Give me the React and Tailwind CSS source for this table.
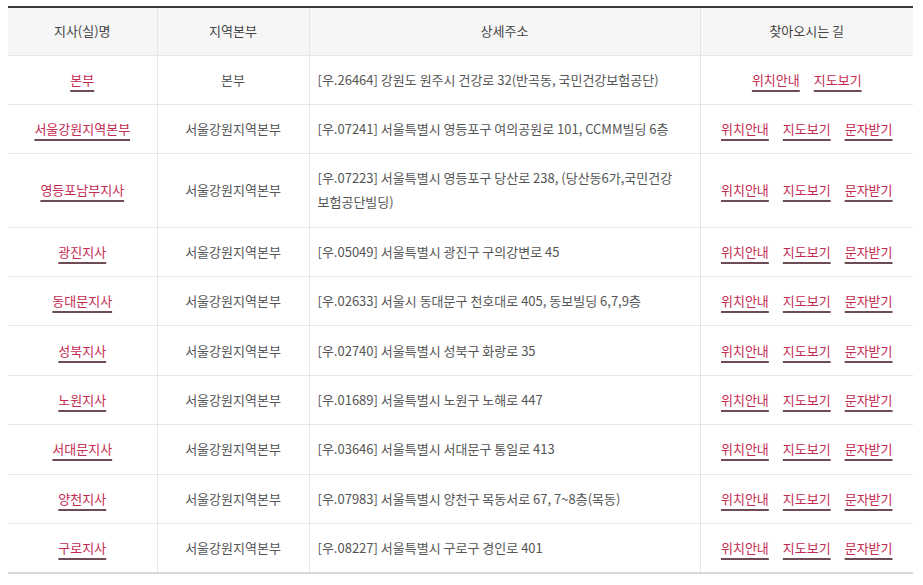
import React from 'react';

const rows = [
	{ name: '본부', region: '본부', addr: '[우.26464] 강원도 원주시 건강로 32(반곡동, 국민건강보험공단)', sms: false },
	{ name: '서울강원지역본부', region: '서울강원지역본부', addr: '[우.07241] 서울특별시 영등포구 여의공원로 101, CCMM빌딩 6층', sms: true },
	{ name: '영등포남부지사', region: '서울강원지역본부', addr: '[우.07223] 서울특별시 영등포구 당산로 238, (당산동6가,국민건강보험공단빌딩)', sms: true },
	{ name: '광진지사', region: '서울강원지역본부', addr: '[우.05049] 서울특별시 광진구 구의강변로 45', sms: true },
	{ name: '동대문지사', region: '서울강원지역본부', addr: '[우.02633] 서울시 동대문구 천호대로 405, 동보빌딩 6,7,9층', sms: true },
	{ name: '성북지사', region: '서울강원지역본부', addr: '[우.02740] 서울특별시 성북구 화랑로 35', sms: true },
	{ name: '노원지사', region: '서울강원지역본부', addr: '[우.01689] 서울특별시 노원구 노해로 447', sms: true },
	{ name: '서대문지사', region: '서울강원지역본부', addr: '[우.03646] 서울특별시 서대문구 통일로 413', sms: true },
	{ name: '양천지사', region: '서울강원지역본부', addr: '[우.07983] 서울특별시 양천구 목동서로 67, 7~8층(목동)', sms: true },
	{ name: '구로지사', region: '서울강원지역본부', addr: '[우.08227] 서울특별시 구로구 경인로 401', sms: true }
];

const link = 'text-[#c42a50] underline underline-offset-[5px] decoration-[#6e4c56] decoration-[1.5px]';

export default function App() {
	return (
		<div
			className="bg-white w-[923px] h-[585px] pt-[6px] pl-2"
			style={{ fontFamily: '"Noto Sans CJK KR", "Noto Sans", sans-serif' }}
		>
			<table className="w-[905px] table-fixed border-collapse text-[13px] leading-6 text-[#555]">
				<colgroup>
					<col className="w-[149px]" />
					<col className="w-[152px]" />
					<col className="w-[391px]" />
					<col className="w-[213px]" />
				</colgroup>
				<thead>
					<tr className="border-t-2 border-[#3a3a3a] bg-[#f6f6f6] text-[#444]">
						<th className="h-[48px] font-normal border-r border-[#e3e3e3]">지사(실)명</th>
						<th className="font-normal border-r border-[#e3e3e3]">지역본부</th>
						<th className="font-normal border-r border-[#e3e3e3]">상세주소</th>
						<th className="font-normal">찾아오시는 길</th>
					</tr>
				</thead>
				<tbody className="border-b-2 border-[#d6d6d6]">
					{rows.map((r) => (
						<tr key={r.name} className="border-t border-[#e6e6e6]">
							<td className="py-[12.2px] text-center border-r border-[#e6e6e6]">
								<a href="#" className={link}>{r.name}</a>
							</td>
							<td className="py-[12.2px] text-center border-r border-[#e6e6e6]">{r.region}</td>
							<td className="py-[12.2px] pl-2 pr-6 border-r border-[#e6e6e6]">{r.addr}</td>
							<td className="py-[12.2px]">
								<div className="flex justify-center gap-[14px]">
									<a href="#" className={link}>위치안내</a>
									<a href="#" className={link}>지도보기</a>
									{r.sms ? <a href="#" className={link}>문자받기</a> : null}
								</div>
							</td>
						</tr>
					))}
				</tbody>
			</table>
		</div>
	);
}
